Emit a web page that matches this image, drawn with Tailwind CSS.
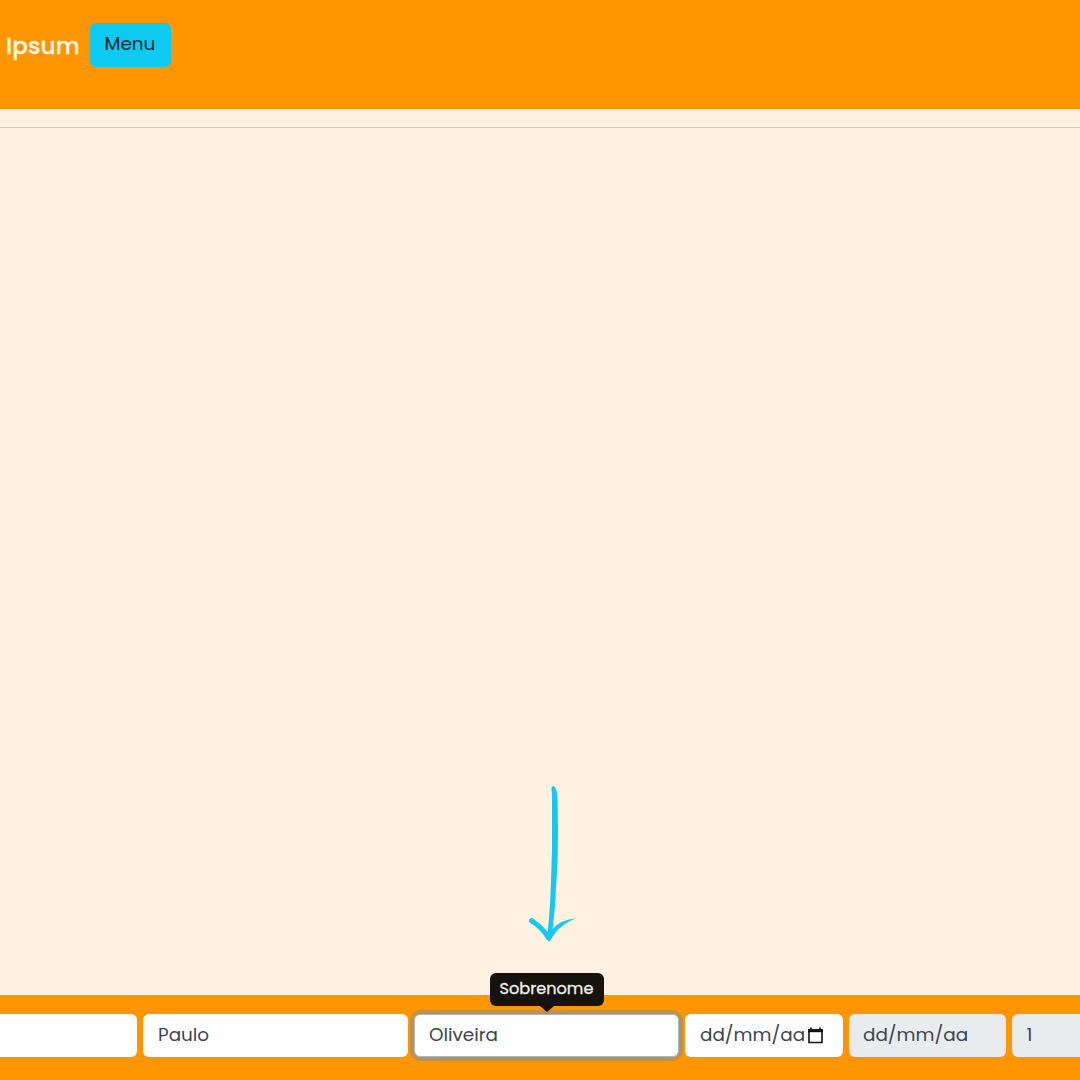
<!DOCTYPE html>
<html lang="pt-BR">
<head>
<meta charset="utf-8">
<title>Ipsum</title>
<script src="https://cdn.jsdelivr.net/npm/@tailwindcss/browser@4"></script>
</head>
<body class="w-[1080px] h-[1080px] overflow-hidden flex flex-col bg-[#fff2e2] font-['Poppins','Inter',sans-serif] text-[#3c444c]">
  <header class="h-[108.5px] shrink-0 bg-[#ff9500] flex items-start gap-[11px] pl-[6px] pt-[23px]">
    <span class="w-[73px] h-[44px] leading-[46px] text-[23px] font-medium text-[#fff8ec] whitespace-nowrap tracking-[0.2px] [-webkit-text-stroke:0.3px_#fff8ec]">Ipsum</span>
    <button class="w-[81px] h-[44px] rounded-md bg-[#0dcaf0] text-[#06222c] text-[18.4px] pb-[2px] pr-[1px] text-center">Menu</button>
  </header>
  <main class="flex-1 pt-[18.5px] relative">
    <div class="h-px bg-[#d3c9bc]"></div>
    <svg class="absolute left-[520px] top-[671.5px]" width="64" height="170" viewBox="520 780 64 170" fill="#16c8ee">
      <path d="M551.5 787.5 Q553 784.5 555.2 787.5 Q557.6 792 557.6 800 L558 830 L557.7 857 Q557.3 874 556 888 L555.2 905 L552.6 929 Q561 919.5 575.8 918.2 Q561 924.5 554.5 934 L549.3 942 L546.5 939.2 Q540 928.5 529.5 922.5 Q528 919.5 530.5 918.2 Q532 917.5 534 919.3 Q542 924.5 547.8 932 Q550.5 906 551 881 L552 850 L552 800 Q552 793 551.5 789.5 Z"/>
    </svg>
  </main>
  <footer class="h-[85px] shrink-0 bg-[#ff9500] flex items-start gap-[6px] pt-[19px] text-[18.4px] leading-[42px] whitespace-nowrap">
    <div class="w-[137px] h-[43px] shrink-0 rounded-r-md bg-white"></div>
    <div class="w-[265px] h-[43px] shrink-0 rounded-md bg-white pl-[15px]">Paulo</div>
    <div class="w-[265px] h-[43px] shrink-0 rounded-md bg-white pl-[14px] relative border border-[#9db8d8] ring-4 ring-[#c58f45] leading-[40px]">Oliveira
      <div class="absolute left-[74.5px] top-[-42px] w-[114px] h-[33px] rounded-md bg-[#16130f] text-[#f1efec] text-[16.1px] leading-[32px] text-center [-webkit-text-stroke:0.3px_#f1efec]">Sobrenome</div>
      <svg class="absolute left-[124.5px] top-[-9px]" width="14" height="6" viewBox="0 0 14 6"><path d="M0 0H14L7 6Z" fill="#170e00"/></svg>
    </div>
    <div class="w-[157.5px] h-[43px] shrink-0 rounded-md bg-white pl-[15px] flex items-start">
      <span class="w-[106px]">dd/mm/aa</span>
      <svg class="mt-[13px] ml-[1px]" width="17" height="17" viewBox="0 0 17 17"><path d="M2 3H15V15.5H2Z" fill="none" stroke="#111" stroke-width="1.6"/><path d="M1.2 2.2H15.8V5.2H1.2Z" fill="#111"/><path d="M4 0.5V3M13 0.5V3" stroke="#111" stroke-width="1.6"/></svg>
    </div>
    <div class="w-[157px] h-[43px] shrink-0 rounded-md bg-[#e9ecef] pl-[14.5px]"><span class="block w-[104.5px] overflow-hidden">dd/mm/aa</span></div>
    <div class="w-[90px] h-[43px] shrink-0 rounded-l-md bg-[#e9ecef] pl-[15px]">1</div>
  </footer>
</body>
</html>
